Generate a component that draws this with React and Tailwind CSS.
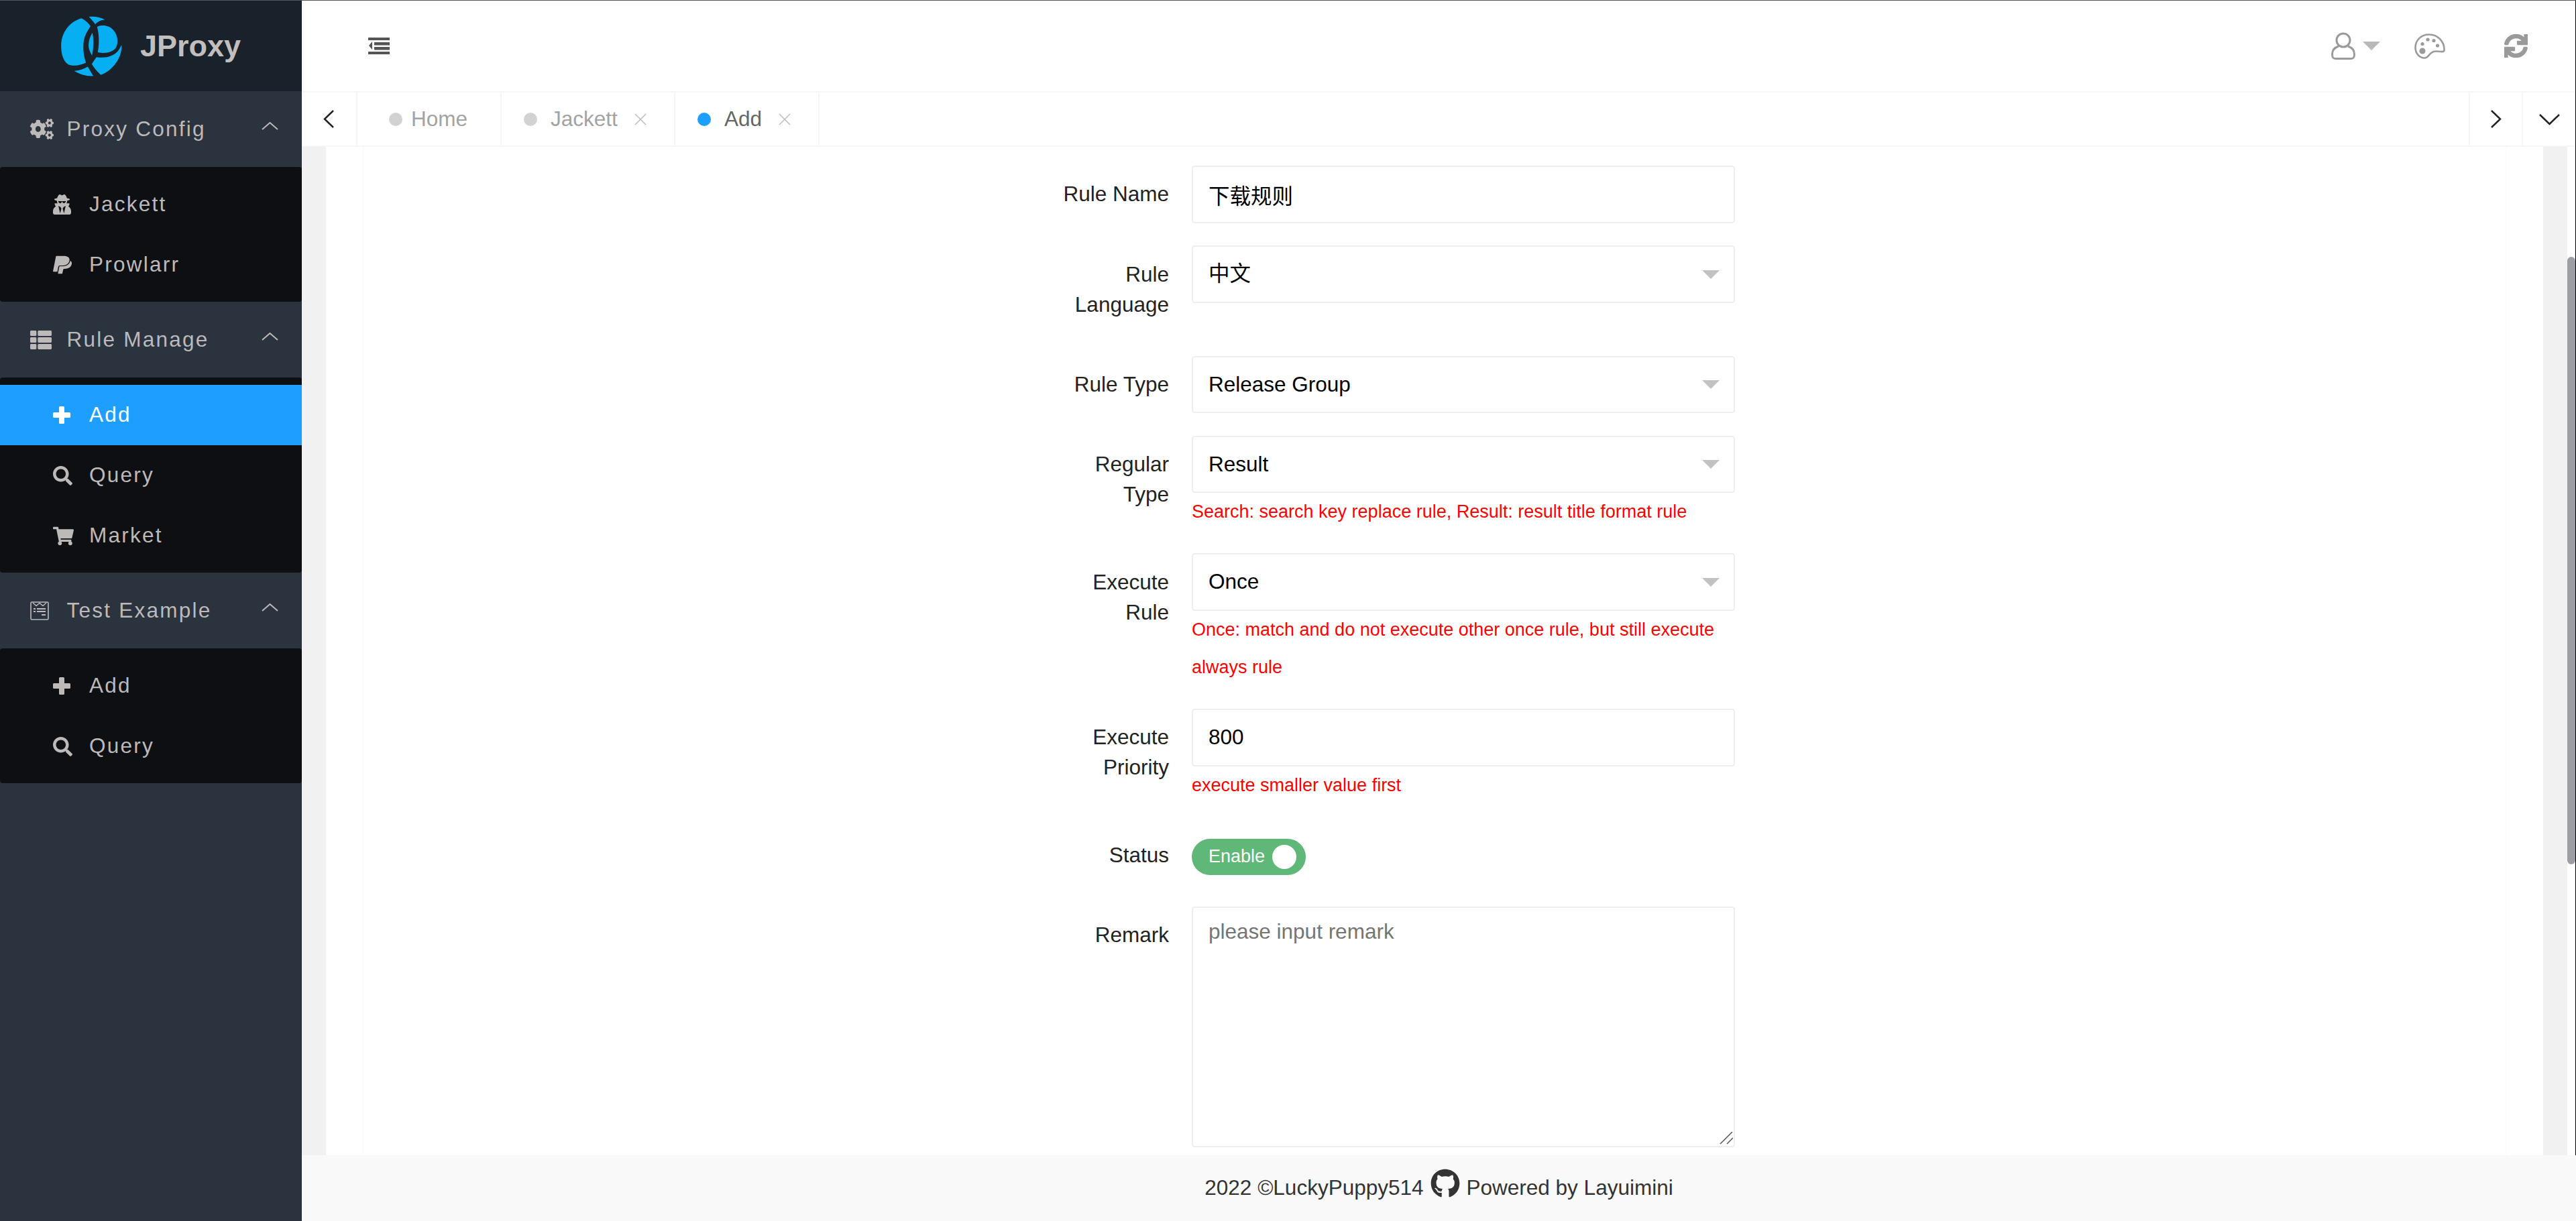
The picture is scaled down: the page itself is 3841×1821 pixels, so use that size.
import { FaCogs, FaUserSecret, FaPaypal, FaThList, FaSearch, FaShoppingCart, FaSync, FaGithub } from "react-icons/fa";

const menu = [
  {
    title: "Proxy Config",
    icon: <FaCogs className="w-[35px] h-[31px]" preserveAspectRatio="none" />,
    items: [
      { label: "Jackett", icon: <FaUserSecret className="w-[27px] h-[30px]" preserveAspectRatio="none" /> },
      { label: "Prowlarr", icon: <FaPaypal className="w-[28px] h-[30px]" preserveAspectRatio="none" /> },
    ],
  },
  {
    title: "Rule Manage",
    icon: <FaThList className="w-[32px] h-[32px]" />,
    items: [
      { label: "Add", icon: <PlusIcon />, active: true },
      { label: "Query", icon: <FaSearch className="w-[29px] h-[29px]" /> },
      { label: "Market", icon: <FaShoppingCart className="w-[31px] h-[31px]" /> },
    ],
  },
  {
    title: "Test Example",
    icon: <NewsIcon />,
    items: [
      { label: "Add", icon: <PlusIcon /> },
      { label: "Query", icon: <FaSearch className="w-[29px] h-[29px]" /> },
    ],
  },
];

function PlusIcon() {
  return (
    <svg width="26" height="26" viewBox="0 0 26 26" fill="currentColor">
      <path d="M10.5 0h5a1.5 1.5 0 0 1 1.5 1.5V9h7.5A1.5 1.5 0 0 1 26 10.500v5a1.500 1.500 0 0 1-1.500 1.500H17v7.500a1.500 1.500 0 0 1-1.500 1.500h-5A1.500 1.500 0 0 1 9 24.500V17H1.500A1.500 1.500 0 0 1 0 15.500v-5A1.500 1.500 0 0 1 1.500 9H9V1.500A1.500 1.500 0 0 1 10.500 0Z" />
    </svg>
  );
}

function NewsIcon() {
  return (
    <svg width="28" height="28" viewBox="0 0 28 28" fill="none" stroke="currentColor">
      <rect x="1" y="1" width="26" height="26" rx="1.5" strokeWidth="1.6" />
      <polyline points="4,2 9,6.5 14,2.5 19,6.5 24,2" strokeWidth="1.4" />
      <path d="M5 11h3M10 11h13M5 15h3M10 15h13M17 20h6" strokeWidth="2" />
    </svg>
  );
}

function Logo() {
  return (
    <svg width="91" height="90" viewBox="93 80 274 272" fill="#05aff2">
      <path d="M185 90C130 105 93 155 93 215C93 255 105 285 125 298C150 308 180 302 205 290C190 250 188 190 205 160C212 145 220 135 225 125C215 110 200 98 185 90Z" />
      <path d="M218 83C245 80 270 85 292 97C275 96 258 105 247 117C238 105 228 93 218 83Z" />
      <path d="M255 128C275 118 310 120 330 145C350 170 352 205 338 225C320 245 290 250 258 243C265 205 265 165 255 128Z" />
      <path d="M234 155C240 185 240 225 232 258C222 240 215 225 217 205C218 185 225 170 234 155Z" />
      <path d="M231 296C240 282 248 270 252 265C295 272 345 262 365 210C370 260 330 325 272 345C255 330 240 312 231 296Z" />
      <path d="M152 327C175 325 195 318 213 308C222 322 230 338 238 350C208 352 178 343 152 327Z" />
    </svg>
  );
}

function Chevron({ points, w, h, stroke = "#222", width = 2.5 }) {
  return (
    <svg width={w} height={h} viewBox={`0 0 ${w} ${h}`} fill="none" stroke={stroke} strokeWidth={width}>
      <polyline points={points} />
    </svg>
  );
}

function CloseIcon() {
  return (
    <svg width="18" height="18" viewBox="0 0 18 18" stroke="#bbbbbb" strokeWidth="1.5">
      <path d="M1 1L17 17M17 1L1 17" />
    </svg>
  );
}

function Sidebar() {
  return (
    <aside className="w-[450px] shrink-0 bg-[#2a333e] text-[#bdb9b9] text-[31.5px] tracking-[2.25px]">
      <div className="h-[135px] bg-[#19212a] flex items-center pl-[91px] gap-[27px]">
        <Logo />
        <span className="text-[45px] font-bold tracking-normal text-[#c2bebe]">JProxy</span>
      </div>
      {menu.map((group) => (
        <div key={group.title}>
          <div className="h-[113px] flex items-center pl-[45px] pr-[35px]">
            <span className="w-[54.5px] flex items-center">{group.icon}</span>
            <span className="flex-1">{group.title}</span>
            <span className="mb-[10px] flex">
              <Chevron points="1,11 12.5,1 24,11" w={25} h={12} stroke="#bdb9b9" width={2} />
            </span>
          </div>
          <div className="bg-[#0d0f13] rounded-[4px] pt-[11px] pb-[10px]">
            {group.items.map((item) => (
              <div
                key={item.label}
                className={`h-[90px] flex items-center pl-[79px] ${item.active ? "bg-[#1e9fff] text-white" : ""}`}
              >
                <span className="w-[54px] flex items-center">{item.icon}</span>
                <span>{item.label}</span>
              </div>
            ))}
          </div>
        </div>
      ))}
    </aside>
  );
}

function TopBar() {
  return (
    <header className="h-[137px] shrink-0 bg-white border-b-2 border-[#f6f6f6] flex items-center justify-between pl-[99px] pr-[71px]">
      <svg width="32" height="25" viewBox="0 0 32 25" fill="#555555">
        <rect width="32" height="4" />
        <rect x="9" y="7" width="23" height="4.5" />
        <rect x="9" y="14" width="23" height="4.5" />
        <rect y="21" width="32" height="4" />
        <polygon points="6,6 6,18 1,12" />
      </svg>
      <div className="flex items-center">
        <svg width="36" height="41" viewBox="0 0 36 41" fill="none" stroke="#9a9a9a" strokeWidth="3">
          <circle cx="18" cy="12" r="10" />
          <path d="M11 21C5 23 1.5 27 1.5 33C1.5 38 3 39.5 7 39.5L29 39.5C33 39.5 34.5 38 34.5 33C34.5 27 31 23 25 21" />
        </svg>
        <span className="ml-[11px] mr-[51px] w-0 h-0 border-x-[13.5px] border-t-[13.5px] border-x-transparent border-t-[#b8b8b8]" />
        <svg width="46" height="38" viewBox="0 0 46 38" fill="none" stroke="#9a9a9a" strokeWidth="2.6">
          <path d="M22 1.5C10 1.5 1.5 10 1.5 21C1.5 30 8 36.5 15 36.5C22 36.5 22 27 31 26.5C36 26 44 29 44.5 25C45 12 35 1.5 22 1.5Z" />
          <g fill="#9a9a9a" stroke="none">
            <circle cx="12" cy="15.5" r="2.6" />
            <circle cx="20" cy="9" r="2.6" />
            <circle cx="29" cy="10.5" r="2.6" />
            <circle cx="34.5" cy="18" r="2.6" />
            <circle cx="12" cy="26" r="4.5" />
          </g>
        </svg>
        <FaSync className="ml-[88px] w-[35px] h-[35px] text-[#9a9a9a] stroke-[24px]" />
      </div>
    </header>
  );
}

function Tab({ label, width, dot, text, closable }) {
  return (
    <div className={`${width} h-full flex items-center border-r-2 border-[#f6f6f6] ${text}`}>
      <span className={`ml-[33px] w-[20px] h-[20px] rounded-full ${dot}`} />
      <span className={closable ? "ml-[20px]" : "ml-[13px]"}>{label}</span>
      {closable && (
        <span className="ml-[25px] flex">
          <CloseIcon />
        </span>
      )}
    </div>
  );
}

function TabBar() {
  return (
    <nav className="h-[81px] shrink-0 bg-white border-b-2 border-[#f6f6f6] flex items-center text-[31.5px]">
      <div className="w-[83px] h-full flex items-center justify-center border-r-2 border-[#f6f6f6]">
        <Chevron points="15,1 2,13.5 15,26" w={17} h={27} />
      </div>
      <Tab label="Home" width="w-[215px] pl-[14px]" dot="bg-[#d2d2d2]" text="text-[#a3a3a3]" />
      <Tab label="Jackett" width="w-[259px]" dot="bg-[#d2d2d2]" text="text-[#a3a3a3]" closable />
      <Tab label="Add" width="w-[215px]" dot="bg-[#1e9fff]" text="text-[#666666]" closable />
      <div className="flex-1" />
      <div className="w-[81px] h-full flex items-center justify-center border-x-2 border-[#f6f6f6]">
        <Chevron points="2,1 15,13.5 2,26" w={17} h={27} />
      </div>
      <div className="w-[78px] h-full flex items-center justify-center">
        <Chevron points="1,2 15.5,16 30,2" w={31} h={18} />
      </div>
    </nav>
  );
}

function Row({ label, hint, children }) {
  return (
    <div className="flex items-start gap-[34px] mb-[33.75px]">
      <label className="w-[270px] shrink-0 pl-[90px] py-[20.25px] text-right leading-[45px] text-[#222222]">{label}</label>
      <div className="w-[810px]">
        {children}
        {hint && <p className="text-[27px] leading-[56.25px] text-[#ff0000]">{hint}</p>}
      </div>
    </div>
  );
}

const fieldClass = "w-full h-[85.5px] px-[23px] border-2 border-[#eeeeee] rounded-[4.5px] bg-white text-black text-[31.5px] outline-none";

function Select({ value }) {
  return (
    <div className={`${fieldClass} flex items-center justify-between pr-[21px]`}>
      <span>{value}</span>
      <span className="w-0 h-0 border-x-[13.5px] border-t-[13.5px] border-x-transparent border-t-[#c2c2c2]" />
    </div>
  );
}

function RuleForm() {
  return (
    <form className="pl-[931px] pt-[28px] text-[31.5px]">
      <Row label="Rule Name">
        <input className={fieldClass} readOnly value="下载规则" />
      </Row>
      <Row label="Rule Language">
        <Select value="中文" />
      </Row>
      <Row label="Rule Type">
        <Select value="Release Group" />
      </Row>
      <Row label="Regular Type" hint="Search: search key replace rule, Result: result title format rule">
        <Select value="Result" />
      </Row>
      <Row label="Execute Rule" hint="Once: match and do not execute other once rule, but still execute always rule">
        <Select value="Once" />
      </Row>
      <Row label="Execute Priority" hint="execute smaller value first">
        <input className={fieldClass} readOnly value="800" />
      </Row>
      <Row label="Status">
        <div className="mt-[18px] mb-[13.5px] w-[170px] h-[54px] rounded-full bg-[#5fb878] flex items-center justify-between pl-[25px] pr-[14px] text-white text-[27px]">
          <span>Enable</span>
          <span className="w-[36px] h-[36px] rounded-full bg-white" />
        </div>
      </Row>
      <Row label="Remark">
        <div className="relative">
          <textarea
            className="block w-full h-[359px] px-[23px] py-[13.5px] leading-[45px] border-2 border-[#eeeeee] rounded-[4.5px] bg-white text-[31.5px] outline-none resize-none placeholder:text-[#757575]"
            placeholder="please input remark"
          />
          <svg className="absolute right-[3px] bottom-[4px]" width="20" height="19" viewBox="0 0 20 19" stroke="#555555" strokeWidth="1.5">
            <path d="M1 18L19 0M11 18L20 9" />
          </svg>
        </div>
      </Row>
    </form>
  );
}

export default function App() {
  return (
    <div className="h-screen flex flex-col overflow-hidden bg-white border-t border-[#555555] font-['Liberation_Sans','Noto_Sans_CJK_SC',sans-serif]">
      <div className="flex-1 min-h-0 flex">
        <Sidebar />
        <main className="flex-1 min-w-0 flex flex-col">
          <div className="flex-1 min-h-0 flex flex-col border-r border-black">
            <TopBar />
            <TabBar />
            <div className="flex-1 min-h-0 flex overflow-hidden">
              <div className="flex-1 min-w-0 px-[36px] bg-[#f1f1f1]">
                <div className="h-full bg-white px-[55px]">
                  <div className="h-full border-x border-[#fafafa]">
                    <RuleForm />
                  </div>
                </div>
              </div>
              <div className="w-[12px] shrink-0 bg-white">
                <div className="mt-[164px] h-[906px] rounded-[6px] bg-[#9d9ea3]" />
              </div>
            </div>
          </div>
          <footer className="h-[98px] shrink-0 bg-[#f9f9f9] flex items-center justify-center gap-[10px] text-[31.5px] text-[#333333]">
            <span>2022 ©LuckyPuppy514</span>
            <FaGithub className="w-[44px] h-[44px] mb-[14px]" />
            <span>Powered by Layuimini</span>
          </footer>
        </main>
      </div>
    </div>
  );
}
